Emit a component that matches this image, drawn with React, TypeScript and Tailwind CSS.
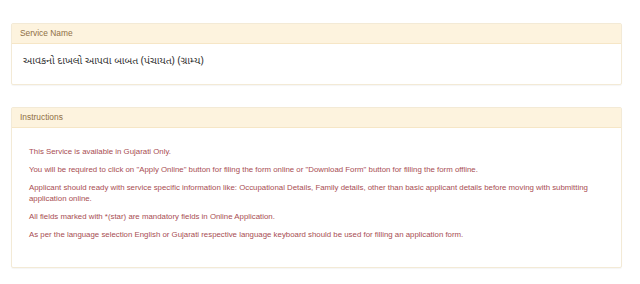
import React from "react";

const lines: string[][] = [
  ["This Service is available in Gujarati Only."],
  [
    'You will be required to click on "Apply Online" button for filing the form online or "Download Form" button for filling the form offline.',
  ],
  [
    "Applicant should ready with service specific information like: Occupational Details, Family details, other than basic applicant details before moving with submitting",
    "application online.",
  ],
  ["All fields marked with *(star) are mandatory fields in Online Application."],
  [
    "As per the language selection English or Gujarati respective language keyboard should be used for filling an application form.",
  ],
];

export default function App() {
  return (
    <div
      className="w-[640px] h-[284px] bg-white overflow-hidden pl-[11px] pt-[23px]"
      style={{ fontFamily: '"Liberation Sans", Arial, sans-serif' }}
    >
      <div className="w-[611px] border border-[#f3ead6] rounded-[2px] shadow-[0_1px_1px_rgba(0,0,0,0.04)]">
        <div className="h-[20px] bg-[#fdf3de] border-b border-[#f6e6c6] flex items-center pl-[8px] text-[8.4px] text-[#8f6f45]">
          Service Name
        </div>
        <div className="h-[40px] pl-[11px] pt-[10px] text-[10.4px] text-[#333333]" style={{ fontFamily: '"Noto Sans Gujarati", "Lohit Gujarati", "Noto Sans", sans-serif' }}>
          આવકનો દાખલો આપવા બાબત (પંચાયત) (ગ્રામ્ય)
        </div>
      </div>

      <div className="mt-[22px] w-[611px] h-[161px] border border-[#f3ead6] rounded-[2px] shadow-[0_1px_1px_rgba(0,0,0,0.04)]">
        <div className="h-[20px] bg-[#fdf3de] border-b border-[#f6e6c6] flex items-center pl-[8px] text-[8.4px] text-[#8f6f45]">
          Instructions
        </div>
        <div className="pl-[17px] pt-[18px] text-[7.85px] leading-[11px] text-[#a84d52] flex flex-col gap-[7px]">
          {lines.map((p, i) => (
            <p key={i}>
              {p.map((l, j) => (
                <React.Fragment key={j}>
                  {j > 0 && <br />}
                  {l}
                </React.Fragment>
              ))}
            </p>
          ))}
        </div>
      </div>
    </div>
  );
}
